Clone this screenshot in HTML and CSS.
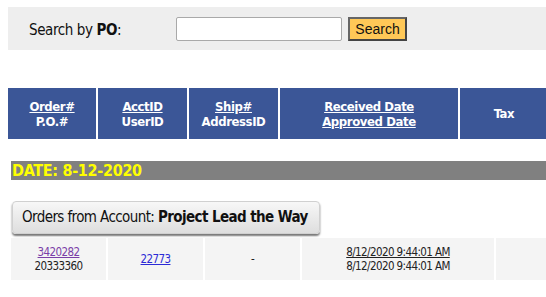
FILE: index.html
```html
<!DOCTYPE html>
<html>
<head>
    <title>Orders</title>
    <link rel="stylesheet" href="styles.css">
</head>
<body>
    <div class="search-bar">
        <label class="search-label" for="poSearch">Search by <b>PO</b>:</label>
        <input type="text" id="poSearch" class="search-input">
        <button class="search-btn">Search</button>
    </div>

    <div class="head-row">
        <div class="head-cell col-order"><a href="#">Order#</a><br>P.O.#</div>
        <div class="head-cell col-acct"><a href="#">AcctID</a><br>UserID</div>
        <div class="head-cell col-ship"><a href="#">Ship#</a><br>AddressID</div>
        <div class="head-cell col-date"><a href="#">Received Date</a><br><a href="#">Approved Date</a></div>
        <div class="head-cell col-tax">Tax</div>
    </div>

    <div class="date-bar">DATE: 8-12-2020</div>

    <div class="account-box">Orders from Account: <b>Project Lead the Way</b></div>

    <div class="data-row">
        <div class="data-cell col-order"><a href="#" class="visited">3420282</a><br>20333360</div>
        <div class="data-cell col-acct"><a href="#">22773</a></div>
        <div class="data-cell col-ship">-</div>
        <div class="data-cell col-date"><a href="#" class="plain">8/12/2020 9:44:01 AM</a><br>8/12/2020 9:44:01 AM</div>
        <div class="data-cell col-tax"></div>
    </div>
</body>
</html>
```

FILE: styles.css
```css
html {
    overflow: hidden;
}
body {
    font-family: "DejaVu Sans Condensed", "DejaVu Sans", sans-serif;
    font-stretch: condensed;
    margin: 7px 0 0 8px;
    width: 620px;
    color: #000;
}

.search-bar {
    background-color: #eeeeee;
    height: 43px;
    display: flex;
    align-items: center;
    padding-left: 21px;
}
.search-label {
    width: 147px;
    font-size: 15px;
    margin-top: 2px;
    letter-spacing: -0.4px;
    color: #111;
}
.search-input {
    width: 162px;
    height: 20px;
    border: 1px solid #a9a9a9;
    border-radius: 2px;
    padding: 1px;
    margin: 0 6px 0 0;
    background: white;
}
.search-btn {
    width: 59px;
    height: 24px;
    background-color: #ffc857;
    border: 2px solid #444;
    border-top-color: #666;
    border-left-color: #666;
    font-family: "Liberation Sans", Arial, sans-serif;
    font-size: 14px;
    padding: 0;
    color: #111;
}

.head-row {
    display: flex;
    gap: 2px;
    margin-top: 38px;
}
.head-cell {
    background-color: #3b5697;
    color: white;
    font-weight: bold;
    font-size: 13px;
    line-height: 15px;
    letter-spacing: -0.4px;
    height: 51px;
    display: flex;
    flex-direction: column;
    justify-content: center;
    text-align: center;
}
.head-cell br {
    display: none;
}
.head-cell a {
    color: white;
}
.head-row .col-order { width: 88px; }
.head-row .col-acct { width: 89px; }
.head-row .col-ship { width: 89px; }
.head-row .col-date { width: 178px; }
.head-row .col-tax { width: 88px; }

.date-bar {
    background-color: #808080;
    color: #ffff00;
    font-weight: bold;
    font-size: 16px;
    height: 19px;
    line-height: 19px;
    letter-spacing: -0.3px;
    margin: 22px 0 0 3px;
    padding-left: 1px;
}

.account-box {
    display: inline-block;
    white-space: nowrap;
    margin: 21px 0 0 4px;
    height: 31px;
    line-height: 31px;
    padding: 0 11px 0 9px;
    font-size: 15px;
    letter-spacing: -0.6px;
    background: linear-gradient(#f7f7f7, #dedede);
    border: 1px solid #d0d0d0;
    border-radius: 4px;
    box-shadow: 0 2px 2px #777;
    color: #111;
}

.data-row {
    display: flex;
    gap: 2px;
    margin: 4px 0 0 3px;
}
.data-cell {
    background-color: #f4f4f4;
    font-size: 11.5px;
    line-height: 14px;
    letter-spacing: -0.6px;
    height: 42px;
    display: flex;
    flex-direction: column;
    justify-content: center;
    text-align: center;
    color: #222;
}
.data-cell br {
    display: none;
}
.data-cell a {
    color: #2b2bd6;
}
.data-cell a.visited {
    color: #7a3fa8;
}
.data-cell a.plain {
    color: #222;
}
.data-row .col-order { width: 95px; }
.data-row .col-acct { width: 95px; }
.data-row .col-ship { width: 95px; }
.data-row .col-date { width: 192px; }
.data-row .col-tax { width: 95px; }
```
